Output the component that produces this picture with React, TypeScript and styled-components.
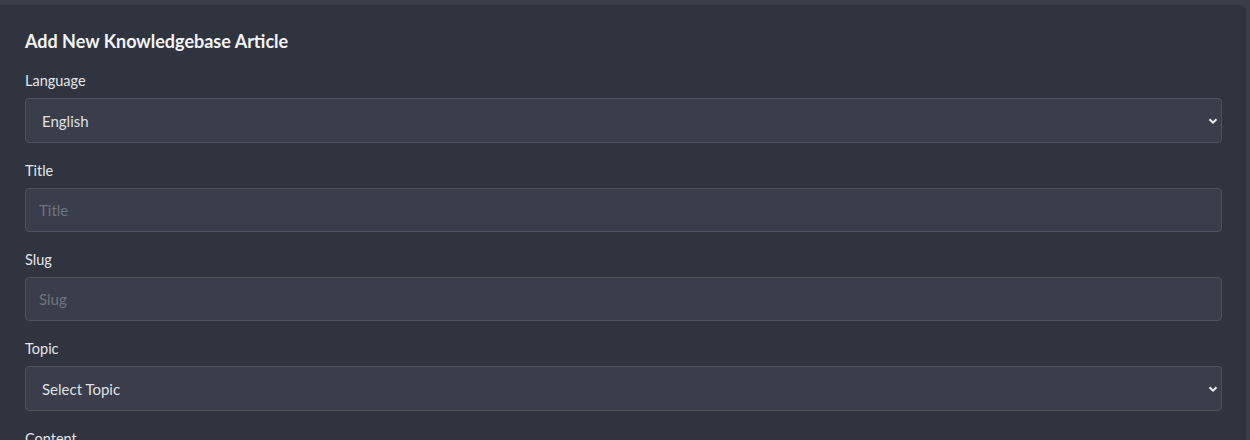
import styled, { createGlobalStyle } from 'styled-components';

const GlobalStyle = createGlobalStyle`
  html, body {
    margin: 0;
    padding: 0;
    background: #393e49;
    font-family: Lato, 'Open Sans', sans-serif;
    overflow: hidden;
  }
`;

const Page = styled.div`
  padding: 5px 4px 0 0;
  height: 435px;
`;

const Card = styled.section`
  background: #2f343e;
  border-top-right-radius: 6px;
  padding: 25px 24px 0 25px;
  height: 100%;
  box-sizing: border-box;
`;

const Heading = styled.h2`
  margin: 0 0 17.5px;
  font-size: 18px;
  line-height: 22px;
  font-weight: 700;
  color: #f3f4f6;
`;

const Field = styled.div`
  display: flex;
  flex-direction: column;
  margin-bottom: 16.5px;
`;

const Label = styled.label`
  font-size: 14.5px;
  line-height: 21px;
  color: #e4e6ea;
  margin-bottom: 7.5px;
`;

const controlBase = `
  box-sizing: border-box;
  width: 100%;
  height: 44px;
  background: #3a3e4a;
  border: 1px solid #4d525d;
  border-radius: 4px;
  font-family: Lato, 'Open Sans', sans-serif;
  font-size: 15px;
  color: #dfe1e5;
  outline: none;
`;

const Input = styled.input`
  ${controlBase}
  padding: 0 13px;
  &::placeholder {
    color: #6f747e;
  }
`;

const SelectWrap = styled.div`
  position: relative;
`;

const Select = styled.select`
  ${controlBase}
  height: 45px;
  appearance: none;
  padding: 0 40px 0 16px;
`;

const Chevron = styled.svg`
  position: absolute;
  right: 4px;
  top: 50%;
  width: 10px;
  height: 10px;
  transform: translateY(-50%);
  pointer-events: none;
`;

const SelectBox = ({ options }: { options: string[] }) => (
  <SelectWrap>
    <Select defaultValue={options[0]}>
      {options.map((o) => (
        <option key={o}>{o}</option>
      ))}
    </Select>
    <Chevron viewBox="0 0 10 10">
      <path d="M1.5 3.2 L5 6.7 L8.5 3.2" fill="none" stroke="#eceef1" strokeWidth="2" />
    </Chevron>
  </SelectWrap>
);

export default function App() {
  return (
    <>
      <GlobalStyle />
      <Page>
        <Card>
          <Heading>Add New Knowledgebase Article</Heading>
          <Field>
            <Label>Language</Label>
            <SelectBox options={['English']} />
          </Field>
          <Field>
            <Label>Title</Label>
            <Input placeholder="Title" />
          </Field>
          <Field>
            <Label>Slug</Label>
            <Input placeholder="Slug" />
          </Field>
          <Field>
            <Label>Topic</Label>
            <SelectBox options={['Select Topic']} />
          </Field>
          <Field>
            <Label>Content</Label>
          </Field>
        </Card>
      </Page>
    </>
  );
}
